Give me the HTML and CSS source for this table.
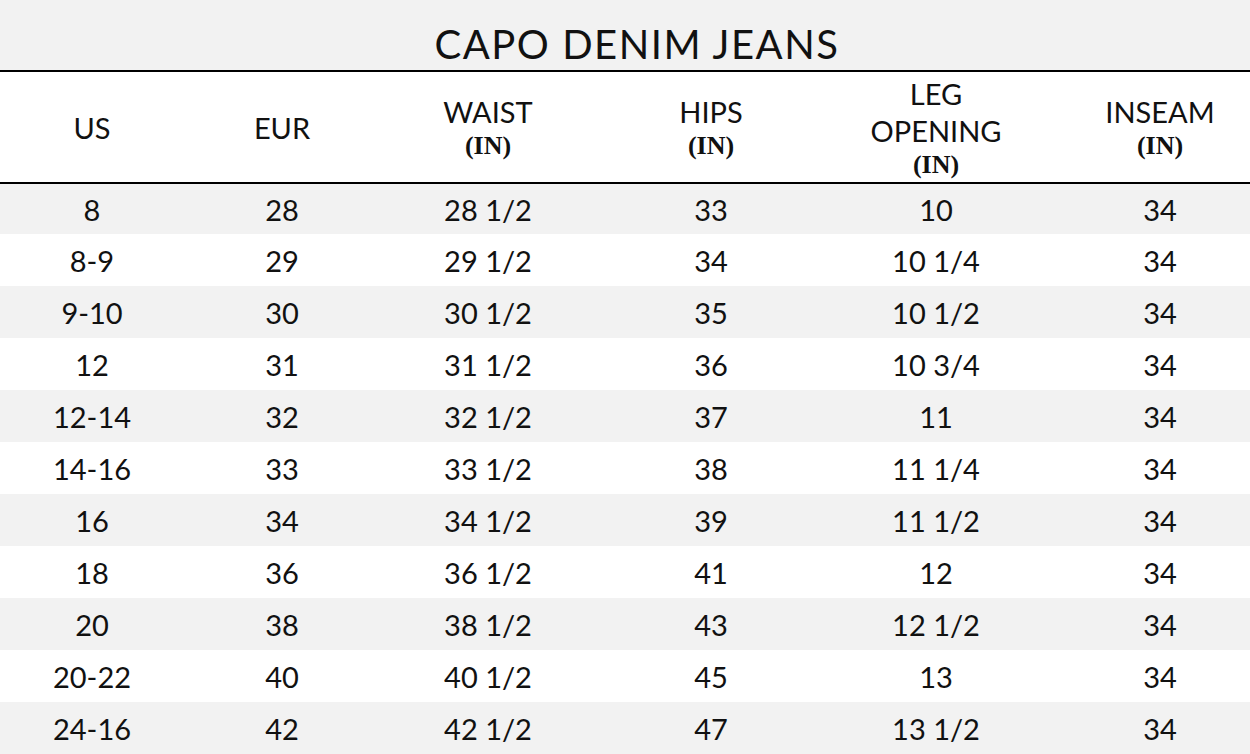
FILE: index.html
```html
<!DOCTYPE html>
<html>
<head>
<meta charset="utf-8">
<link rel="stylesheet" href="styles.css">
</head>
<body>
<div class="chart">
  <div class="title">CAPO DENIM JEANS</div>
  <div class="row head">
    <div class="cell"><span class="lbl">US</span></div>
    <div class="cell"><span class="lbl">EUR</span></div>
    <div class="cell"><span class="lbl">WAIST</span><span class="unit">(IN)</span></div>
    <div class="cell"><span class="lbl">HIPS</span><span class="unit">(IN)</span></div>
    <div class="cell"><span class="lbl">LEG</span><span class="lbl">OPENING</span><span class="unit">(IN)</span></div>
    <div class="cell"><span class="lbl">INSEAM</span><span class="unit">(IN)</span></div>
  </div>
  <div class="body">
    <div class="row"><div class="cell">8</div><div class="cell">28</div><div class="cell">28 1/2</div><div class="cell">33</div><div class="cell">10</div><div class="cell">34</div></div>
    <div class="row"><div class="cell">8-9</div><div class="cell">29</div><div class="cell">29 1/2</div><div class="cell">34</div><div class="cell">10 1/4</div><div class="cell">34</div></div>
    <div class="row"><div class="cell">9-10</div><div class="cell">30</div><div class="cell">30 1/2</div><div class="cell">35</div><div class="cell">10 1/2</div><div class="cell">34</div></div>
    <div class="row"><div class="cell">12</div><div class="cell">31</div><div class="cell">31 1/2</div><div class="cell">36</div><div class="cell">10 3/4</div><div class="cell">34</div></div>
    <div class="row"><div class="cell">12-14</div><div class="cell">32</div><div class="cell">32 1/2</div><div class="cell">37</div><div class="cell">11</div><div class="cell">34</div></div>
    <div class="row"><div class="cell">14-16</div><div class="cell">33</div><div class="cell">33 1/2</div><div class="cell">38</div><div class="cell">11 1/4</div><div class="cell">34</div></div>
    <div class="row"><div class="cell">16</div><div class="cell">34</div><div class="cell">34 1/2</div><div class="cell">39</div><div class="cell">11 1/2</div><div class="cell">34</div></div>
    <div class="row"><div class="cell">18</div><div class="cell">36</div><div class="cell">36 1/2</div><div class="cell">41</div><div class="cell">12</div><div class="cell">34</div></div>
    <div class="row"><div class="cell">20</div><div class="cell">38</div><div class="cell">38 1/2</div><div class="cell">43</div><div class="cell">12 1/2</div><div class="cell">34</div></div>
    <div class="row"><div class="cell">20-22</div><div class="cell">40</div><div class="cell">40 1/2</div><div class="cell">45</div><div class="cell">13</div><div class="cell">34</div></div>
    <div class="row"><div class="cell">24-16</div><div class="cell">42</div><div class="cell">42 1/2</div><div class="cell">47</div><div class="cell">13 1/2</div><div class="cell">34</div></div>
  </div>
</div>
</body>
</html>
```
FILE: styles.css
```css
html, body {
  margin: 0;
  padding: 0;
  background: #ffffff;
  overflow: hidden;
  width: 1250px;
  height: 754px;
}
.chart {
  width: 1274px;
  font-family: Lato, "Open Sans", sans-serif;
  color: #111111;
}
.title {
  background: #f2f2f2;
  height: 72px;
  box-sizing: border-box;
  padding-top: 24px;
  line-height: 40px;
  font-size: 40px;
  letter-spacing: 1.5px;
  text-align: center;
  border-bottom: 2px solid #000;
}
.row {
  display: grid;
  grid-template-columns: 184px 196px 216px 230px 220px 228px;
  height: 52px;
  align-items: center;
  font-size: 29px;
}
.row .cell {
  text-align: center;
}
.body .row:nth-child(odd) {
  background: #f2f2f2;
}
.body .row:first-child {
  height: 50px;
}
.head {
  height: 112px;
  box-sizing: border-box;
  background: #fff;
  border-bottom: 2px solid #000;
}
.head .cell {
  display: flex;
  flex-direction: column;
  align-items: center;
}
.lbl {
  line-height: 37px;
}
.unit {
  font-family: "Liberation Serif", "Times New Roman", serif;
  font-weight: bold;
  font-size: 26px;
  line-height: 31px;
}
```
